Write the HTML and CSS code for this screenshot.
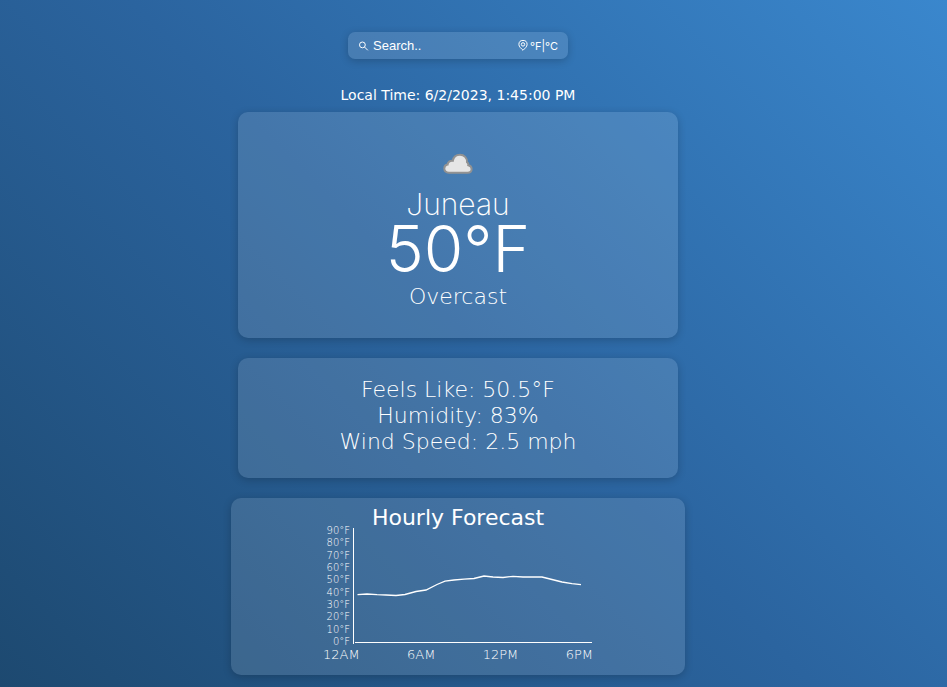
FILE: index.html
```html
<!DOCTYPE html>
<html lang="en">
<head>
<meta charset="utf-8">
<meta name="viewport" content="width=device-width, initial-scale=1">
<title>Weather</title>
<link rel="stylesheet" href="styles.css">
</head>
<body>
<main class="app">
  <form class="search panel">
    <svg class="search-icon" viewBox="0 0 10 10" aria-hidden="true"><circle cx="3.9" cy="3.9" r="2.9"/><path d="M6 6l3.3 3.3"/></svg>
    <input class="search-input" type="text" placeholder="Search.." aria-label="Search">
    <button class="icon-button" type="button" aria-label="Use my location">
      <svg class="pin-icon" viewBox="0 0 10 11" aria-hidden="true"><path d="M5 10.3C3.2 8.4.9 6.8.9 4.5a4.1 4.1 0 0 1 8.2 0C9.100 6.800 6.800 8.400 5 10.300z"/><circle cx="5" cy="4.400" r="1.700"/></svg>
    </button>
    <button class="unit-button" type="button">°F|°C</button>
  </form>

  <p class="local-time">Local Time: 6/2/2023, 1:45:00 PM</p>

  <section class="card panel current">
    <svg class="cloud" viewBox="0 0 30 22" aria-hidden="true"><path d="M6 19.800C3 19.800 1.300 18 1.300 15.600c0-2.200 1.400-3.700 3.300-4C4.700 9 7 7.400 9.800 7.800 10.500 4.200 13.400 1.800 17 1.800c4.200 0 7.200 3.200 7 7.400 1.200.8 1.600 1.900 1.300 3.100 2 .4 3.300 1.700 3.300 3.700 0 2.200-1.600 3.800-3.900 3.800z"/></svg>
    <h1 class="city">Juneau</h1>
    <p class="temperature">50°F</p>
    <p class="condition">Overcast</p>
  </section>

  <section class="card panel details">
    <p>Feels Like: 50.5°F</p>
    <p>Humidity: 83%</p>
    <p>Wind Speed: 2.5 mph</p>
  </section>

  <section class="card panel forecast">
    <h2 class="forecast-title">Hourly Forecast</h2>
    <div class="chart">
      <div class="y-labels">
        <span>90°F</span><span>80°F</span><span>70°F</span><span>60°F</span><span>50°F</span><span>40°F</span><span>30°F</span><span>20°F</span><span>10°F</span><span>0°F</span>
      </div>
      <svg class="plot" viewBox="0 0 240 116" aria-hidden="true">
        <path class="axis" d="M.5 0V116M2 114.500H239"/>
        <polyline class="series" points="4.500,66.700 14,66 24,66.700 33,67 43,67.500 52,66.500 63,63.500 73,62 84,56.500 92,53.200 101,52 111,51.200 121,50.500 131,48 140,49 150,49.500 160,48.300 170,49 180,49 189,49 199,51.500 209,54 219,55.700 228,56.700"/>
      </svg>
      <div class="x-labels"><span>12AM</span><span>6AM</span><span>12PM</span><span>6PM</span></div>
    </div>
  </section>
</main>
</body>
</html>
```
FILE: styles.css
```css
* { box-sizing: border-box; }

html { min-height: 100%; background: linear-gradient(45deg, #1d4970, #2b649f 50%, #3a87cd); }

body {
  margin: 0;
  padding: 32px 31px 12px 0;
  color: #fff;
  font-family: "DejaVu Sans", Inter, sans-serif;
  font-weight: 200;
}

p, h1, h2 { margin: 0; font-weight: 200; }

.app {
  display: flex;
  flex-direction: column;
  align-items: center;
}

.panel {
  background: rgba(255, 255, 255, 0.12);
  box-shadow: 0 2px 8px rgba(0, 0, 0, 0.2);
}

.search {
  display: flex;
  align-items: center;
  width: 220px;
  height: 27px;
  padding: 0 10px;
  border-radius: 7px;
}

.search-icon {
  flex: none;
  width: 11px;
  height: 10px;
  fill: none;
  stroke: #fff;
  stroke-width: 1;
}

.search-input {
  flex: 1;
  min-width: 0;
  padding: 0 4px;
  border: 0;
  outline: 0;
  background: none;
  color: #fff;
  font: 13px "Liberation Sans", sans-serif;
}

.search-input::placeholder { color: #fff; opacity: 1; }

.icon-button,
.unit-button {
  display: block;
  padding: 0;
  border: 0;
  background: none;
  color: #fff;
  font: 11px Inter, sans-serif;
  cursor: pointer;
}

.icon-button { margin-right: 2px; }

.pin-icon {
  display: block;
  width: 10px;
  height: 11px;
  fill: none;
  stroke: #fff;
  stroke-width: 1;
}

.local-time {
  margin: 28px 0 9px;
  font-size: 14px;
  font-weight: 400;
  line-height: 16px;
}

.card {
  width: 100%;
  max-width: 440px;
  margin-bottom: 20px;
  border-radius: 10px;
  text-align: center;
}

.current { padding: 41px 20px 28px; }

.cloud {
  display: block;
  width: 30px;
  height: 22px;
  margin: 0 auto 12px;
  fill: #e6e6e6;
  stroke: #929292;
  stroke-width: 2;
}

.city,
.temperature { font-family: Inter, sans-serif; }

.city { font-size: 30px; line-height: 34px; }
.temperature { font-size: 64px; font-weight: 300; line-height: 56px; }
.condition { margin-top: 7px; font-size: 22px; line-height: 26px; }

.details {
  padding: 19px 20px 23px;
  font-size: 22px;
  line-height: 26px;
}

.forecast {
  max-width: 454px;
  margin-bottom: 0;
  padding: 10px 20px 12px;
}

.forecast-title {
  font-size: 22px;
  font-weight: 400;
  line-height: 20px;
}

.chart {
  display: grid;
  grid-template-columns: 30px 240px;
  width: 270px;
  margin: 0 auto;
}

.y-labels {
  display: flex;
  flex-direction: column;
  justify-content: space-between;
  height: 123px;
  margin: -3px 0 -4px;
  padding-right: 3px;
  font-size: 10px;
  line-height: 12px;
  text-align: right;
}

.plot {
  display: block;
  width: 240px;
  height: 116px;
  fill: none;
  stroke: #fff;
}

.axis { stroke-width: 1; }
.series { stroke-width: 1.3px; }

.x-labels {
  grid-column: 1 / -1;
  display: flex;
  justify-content: space-between;
  padding-top: 3px;
  font-size: 13px;
  line-height: 16px;
}
```
